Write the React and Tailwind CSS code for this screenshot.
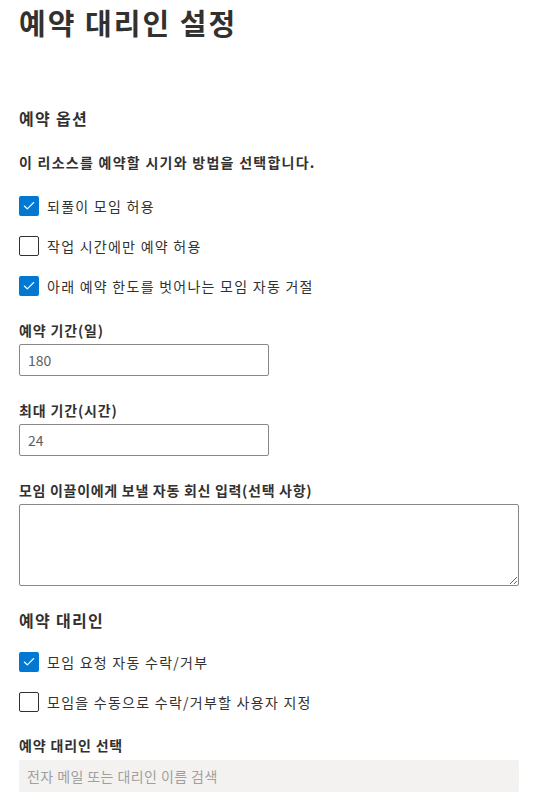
import { Check } from 'lucide-react';

function CheckRow({ checked, label }) {
  return (
    <label className="flex items-center gap-2 h-5">
      {checked ? (
        <span className="w-5 h-5 rounded-[2px] bg-[#0078d4] flex items-center justify-center">
          <Check className="w-3.5 h-3.5 text-white" strokeWidth={2} />
        </span>
      ) : (
        <span className="w-5 h-5 rounded-[2px] border border-[#323130] bg-white" />
      )}
      <span className="text-sm text-[#323130] tracking-[0.09em]">{label}</span>
    </label>
  );
}

export default function App() {
  return (
    <div
      className="w-[556px] h-[800px] bg-white overflow-hidden px-[19px] pt-1 text-[#323130]"
      style={{ fontFamily: '"Noto Sans CJK KR", "Noto Sans", sans-serif' }}
    >
      <h1 className="text-[29px] font-bold leading-9 tracking-[0.07em]">예약 대리인 설정</h1>

      <h2 className="mt-[67px] text-base font-semibold leading-[22px] tracking-[0.08em]">예약 옵션</h2>
      <p className="mt-[23px] text-sm font-semibold leading-5 tracking-[0.09em]">이 리소스를 예약할 시기와 방법을 선택합니다.</p>

      <div className="mt-6 flex flex-col gap-5">
        <CheckRow checked label="되풀이 모임 허용" />
        <CheckRow label="작업 시간에만 예약 허용" />
        <CheckRow checked label="아래 예약 한도를 벗어나는 모임 자동 거절" />
      </div>

      <label className="block mt-6 text-sm font-semibold leading-5 tracking-[0.06em]">예약 기간(일)</label>
      <input
        defaultValue="180"
        className="mt-1 block w-[250px] h-8 px-2 border border-[#8a8886] rounded-[2px] text-sm text-[#605e5c] outline-none"
      />

      <label className="block mt-6 text-sm font-semibold leading-5 tracking-[0.06em]">최대 기간(시간)</label>
      <input
        defaultValue="24"
        className="mt-1 block w-[250px] h-8 px-2 border border-[#8a8886] rounded-[2px] text-sm text-[#605e5c] outline-none"
      />

      <label className="block mt-6 text-sm font-semibold leading-5 tracking-[0.05em]">모임 이끌이에게 보낼 자동 회신 입력(선택 사항)</label>
      <textarea className="mt-1 block w-[500px] h-[82px] px-2 py-1 border border-[#8a8886] rounded-[2px] text-sm outline-none" />

      <h2 className="mt-[23px] text-base font-semibold leading-[22px] tracking-[0.08em]">예약 대리인</h2>
      <div className="mt-[21px] flex flex-col gap-5">
        <CheckRow checked label="모임 요청 자동 수락/거부" />
        <CheckRow label="모임을 수동으로 수락/거부할 사용자 지정" />
      </div>

      <label className="block mt-[23px] text-sm font-semibold leading-5 tracking-[0.06em]">예약 대리인 선택</label>
      <input
        placeholder="전자 메일 또는 대리인 이름 검색"
        className="mt-[5px] block w-[500px] h-8 px-2 bg-[#f3f2f1] rounded-[2px] text-sm tracking-[0.03em] placeholder:text-[#a19f9d] outline-none"
      />
    </div>
  );
}
